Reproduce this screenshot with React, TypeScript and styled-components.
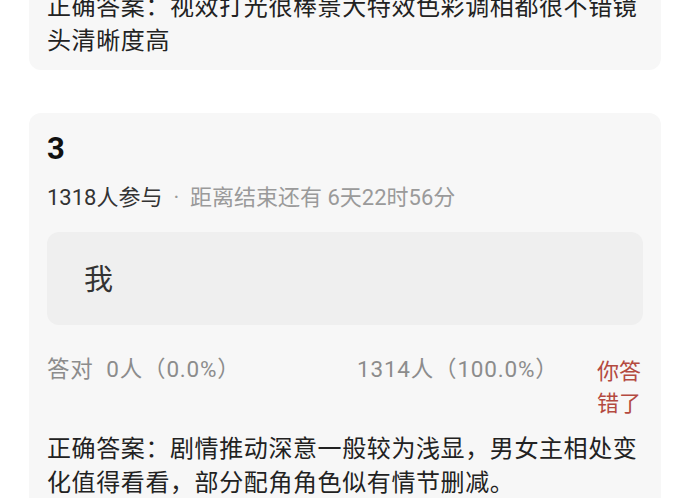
import React from "react";
import styled, { createGlobalStyle } from "styled-components";

const Global = createGlobalStyle`
  html, body { margin: 0; padding: 0; background: #ffffff; }
  body { font-family: "Roboto", "Noto Sans CJK SC", "Noto Sans", sans-serif; overflow: hidden; }
`;

const Page = styled.div`
  width: 690px;
  height: 498px;
  overflow: hidden;
  box-sizing: border-box;
  padding: 0 29px;
  display: flex;
  flex-direction: column;
  gap: 43px;
`;

const Card = styled.section<{ $clipTop?: number }>`
  background: #f7f7f7;
  border-radius: 12px;
  padding: 18px 18px 14px;
  margin-top: ${(p) => (p.$clipTop ? -p.$clipTop : 0)}px;
  display: flex;
  flex-direction: column;
`;

const Answer = styled.p`
  margin: 0;
  font-family: "Noto Sans CJK SC", sans-serif;
  font-size: 24px;
  line-height: 34px;
  color: #222;
  letter-spacing: 0.6px;
`;

const Number = styled.div`
  font-family: "Roboto", "Noto Sans", sans-serif;
  font-weight: 700;
  font-size: 31px;
  line-height: 36px;
  color: #111;
`;

const Meta = styled.div`
  margin-top: 16px;
  font-size: 22px;
  line-height: 30px;
  color: #9a9a9a;
  white-space: pre;
`;

const Strong = styled.span`
  color: #333;
`;

const Option = styled.div`
  margin-top: 19px;
  height: 93px;
  background: #efefef;
  border-radius: 12px;
  display: flex;
  align-items: center;
  padding-left: 37px;
  font-family: "Noto Sans CJK SC", sans-serif;
  font-size: 29px;
  color: #333;
  padding-bottom: 4px;
  box-sizing: border-box;
`;

const Stats = styled.div`
  margin-top: 28px;
  display: grid;
  grid-template-columns: 310px 1fr 46px;
  font-size: 22.5px;
  line-height: 32px;
  color: #8c8c8c;
`;

const Stat = styled.span`
  letter-spacing: 0.8px;
`;

const Wrong = styled.span`
  color: #b44a40;
  font-family: "Noto Sans CJK SC", sans-serif;
  font-size: 22px;
  line-height: 32px;
`;

const FinalAnswer = styled(Answer)`
  margin-top: 13px;
`;

export default function App() {
  return (
    <>
      <Global />
      <Page>
        <Card $clipTop={30}>
          <Answer>正确答案：视效打光很棒景大特效色彩调相都很不错镜头清晰度高</Answer>
        </Card>
        <Card>
          <Number>3</Number>
          <Meta>
            <Strong>1318人参与</Strong>{"  ·  距离结束还有 6天22时56分"}
          </Meta>
          <Option>我</Option>
          <Stats>
            <Stat>答对&nbsp;&nbsp;0人（0.0%）</Stat>
            <Stat>1314人（100.0%）</Stat>
            <Wrong>你答错了</Wrong>
          </Stats>
          <FinalAnswer>
            正确答案：剧情推动深意一般较为浅显，男女主相处变化值得看看，部分配角角色似有情节删减。
          </FinalAnswer>
        </Card>
      </Page>
    </>
  );
}
